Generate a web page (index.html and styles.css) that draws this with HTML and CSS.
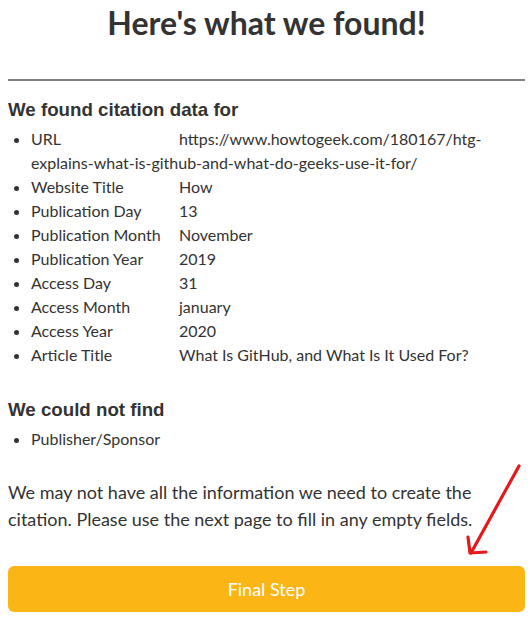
FILE: index.html
```html
<!DOCTYPE html>
<html lang="en">
<head>
<meta charset="utf-8">
<title>Here's what we found!</title>
<link rel="stylesheet" href="styles.css">
</head>
<body>
<div class="page">
  <h1 class="title">Here's what we found!</h1>
  <hr class="divider">
  <h3 class="section-title">We found citation data for</h3>
  <ul class="fields">
    <li><span class="label">URL</span>https://www.howtogeek.com/180167/htg-explains-what-is-github-and-what-do-geeks-use-it-for/</li>
    <li><span class="label">Website Title</span>How</li>
    <li><span class="label">Publication Day</span>13</li>
    <li><span class="label">Publication Month</span>November</li>
    <li><span class="label">Publication Year</span>2019</li>
    <li><span class="label">Access Day</span>31</li>
    <li><span class="label">Access Month</span>january</li>
    <li><span class="label">Access Year</span>2020</li>
    <li><span class="label">Article Title</span>What Is GitHub, and What Is It Used For?</li>
  </ul>
  <h3 class="section-title missing-title">We could not find</h3>
  <ul class="fields">
    <li>Publisher/Sponsor</li>
  </ul>
  <p class="note">We may not have all the information we need to create the citation. Please use the next page to fill in any empty fields.</p>
  <button class="final-btn" type="button">Final Step</button>
</div>
<svg class="arrow" width="70" height="110" viewBox="0 0 70 110" aria-hidden="true">
  <path d="M59 11 L11 98" fill="none" stroke="#e3191b" stroke-width="3.2" stroke-linecap="round"/>
  <path d="M8 82 L10 98 L26 97" fill="none" stroke="#e3191b" stroke-width="3.2" stroke-linecap="round" stroke-linejoin="round"/>
</svg>
</body>
</html>
```
FILE: styles.css
```css
* { box-sizing: border-box; }
html, body { margin: 0; padding: 0; background: #fff; }
body {
  font-family: Lato, "Open Sans", sans-serif;
  color: #333;
  position: relative;
  width: 530px;
}
.page {
  width: 517px;
  margin-left: 8px;
  padding-top: 3px;
}
.title {
  margin: 0;
  font-family: Lato, sans-serif;
  font-weight: 700;
  font-size: 32px;
  line-height: 40px;
  text-align: center;
  color: #333;
}
.divider {
  margin: 36px 0 0;
  height: 2px;
  border: 0;
  background: #808080;
}
.section-title {
  margin: 18px 0 6px;
  font-family: "Liberation Sans", Arial, sans-serif;
  font-weight: 700;
  font-size: 18.72px;
  line-height: 22px;
  color: #333;
}
.missing-title { margin-top: 32px; }
.fields {
  margin: 0;
  padding-left: 23px;
  font-size: 16px;
  line-height: 24px;
}
.fields li { list-style: disc; }
.label {
  display: inline-block;
  width: 148px;
}
.note {
  margin: 28px 0 0;
  font-size: 18px;
  line-height: 27px;
}
.final-btn {
  display: block;
  width: 100%;
  height: 46px;
  margin-top: 33px;
  border: 0;
  border-radius: 6px;
  background: #fbb616;
  color: #fff;
  font-family: Lato, sans-serif;
  font-size: 18px;
  cursor: pointer;
}
.arrow {
  position: absolute;
  left: 460px;
  top: 455px;
}
```
